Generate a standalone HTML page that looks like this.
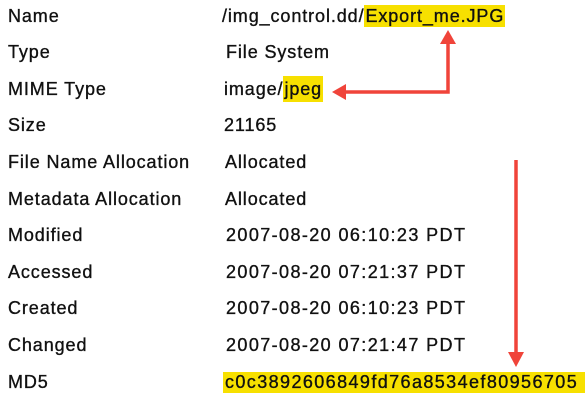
<!DOCTYPE html><html><head><style>
body{margin:0;width:588px;height:401px;background:#fff;position:relative;overflow:hidden;font-family:"Liberation Sans",sans-serif;font-size:18px;letter-spacing:0.9px;color:#111;-webkit-text-stroke:0.35px #111}
.r{position:absolute;line-height:20px;white-space:nowrap}
.h{background:#f7e000}
</style></head><body>
<div class="r" style="left:8px;top:6px">Name</div>
<div class="r" style="left:8px;top:42px">Type</div>
<div class="r" style="left:8px;top:79px">MIME Type</div>
<div class="r" style="left:8px;top:115px">Size</div>
<div class="r" style="left:8px;top:152px">File Name Allocation</div>
<div class="r" style="left:8px;top:189px">Metadata Allocation</div>
<div class="r" style="left:8px;top:225px">Modified</div>
<div class="r" style="left:8px;top:262px">Accessed</div>
<div class="r" style="left:8px;top:298px">Created</div>
<div class="r" style="left:8px;top:335px">Changed</div>
<div class="r" style="left:8px;top:372px">MD5</div>

<div class="r" style="left:222px;top:6px">/img_control.dd/<span class="h" style="padding:1px 1px">Export_me.JPG</span></div>
<div class="r" style="left:226px;top:42px">File System</div>
<div class="r" style="left:224px;top:79px">image/<span class="h" style="padding:3px 1px">jpeg</span></div>
<div class="r" style="left:224px;top:115px">21165</div>
<div class="r" style="left:225px;top:152px">Allocated</div>
<div class="r" style="left:225px;top:189px">Allocated</div>
<div class="r" style="left:226px;top:225px;letter-spacing:1.4px">2007-08-20 06:10:23 PDT</div>
<div class="r" style="left:226px;top:262px;letter-spacing:1.4px">2007-08-20 07:21:37 PDT</div>
<div class="r" style="left:226px;top:298px;letter-spacing:1.4px">2007-08-20 06:10:23 PDT</div>
<div class="r" style="left:226px;top:335px;letter-spacing:1.4px">2007-08-20 07:21:47 PDT</div>
<div class="r h" style="left:223px;top:372px;width:360px;height:21px;padding-left:2px;letter-spacing:1.4px;overflow:hidden">c0c3892606849fd76a8534ef80956705</div>

<svg width="588" height="401" style="position:absolute;left:0;top:0">
<g stroke="#f0443a" stroke-width="3.5" fill="none">
<polyline points="341,92 448,92 448,40"/>
<line x1="516" y1="160" x2="516" y2="355"/>
</g>
<g fill="#f0443a">
<polygon points="332,92 346,84 346,100"/>
<polygon points="448,30 440,44 456,44"/>
<polygon points="516,367 508,352 524,352"/>
</g>
</svg>
</body></html>
